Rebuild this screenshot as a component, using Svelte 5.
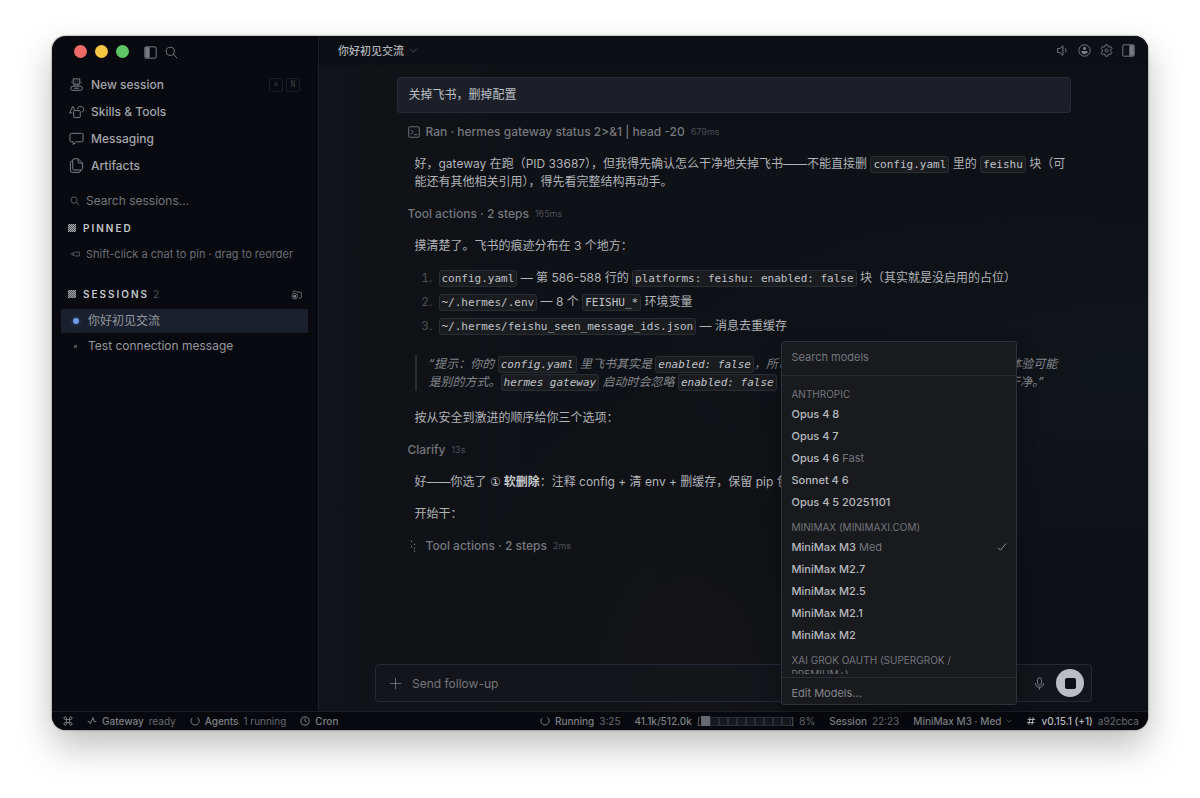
<script lang="ts">
  type Model = {name: string; note?: string};
  type ModelGroup = {label: string; models: Model[]};

  const navItems = [
    {label: 'New session', icon: 'robot', keys: ['×', 'N']},
    {label: 'Skills & Tools', icon: 'shapes', keys: []},
    {label: 'Messaging', icon: 'chat', keys: []},
    {label: 'Artifacts', icon: 'files', keys: []},
  ];

  const sessions = [
    {id: 1, title: '你好初见交流', running: true},
    {id: 2, title: 'Test connection message', running: false},
  ];

  const modelGroups: ModelGroup[] = [
    {
      label: 'Anthropic',
      models: [
        {name: 'Opus 4 8'},
        {name: 'Opus 4 7'},
        {name: 'Opus 4 6', note: 'Fast'},
        {name: 'Sonnet 4 6'},
        {name: 'Opus 4 5 20251101'},
      ],
    },
    {
      label: 'MiniMax (minimaxi.com)',
      models: [
        {name: 'MiniMax M3', note: 'Med'},
        {name: 'MiniMax M2.7'},
        {name: 'MiniMax M2.5'},
        {name: 'MiniMax M2.1'},
        {name: 'MiniMax M2'},
      ],
    },
    {label: 'xAI Grok OAuth (SuperGrok / Premium+)', models: []},
  ];

  let activeSession = $state(1);
  let activeModel = $state('MiniMax M3');
  let menuOpen = $state(true);

  const contextCells = Array.from({length: 10}, (_, i) => i < 1);
</script>

{#snippet icon(name: string)}
  <svg class="icon" viewBox="0 0 16 16" aria-hidden="true">
    {#if name === 'robot'}
      <path d="M4.500 2h7v5.500h-7zM6.500 4v1M9.500 4v1M3 5v1M13 5v1M6.500 7.500v2M9.500 7.500v2M4 9.800h8a2.200 2.200 0 0 1 0 4.400H4a2.200 2.200 0 0 1 0-4.400ZM5.500 12h5" />
    {:else if name === 'shapes'}
      <rect x="5" y="7" width="7" height="7.500" rx="1" />
      <path d="M3.500 9.500H.6L4 2.500l2 4M9 5.500a3.300 3.300 0 1 1 4.800 3.300" />
    {:else if name === 'chat'}
      <path d="M2.500 2.500h11a1.500 1.500 0 0 1 1.500 1.500v6a1.500 1.500 0 0 1-1.500 1.500H8L4.500 14.500v-3h-2A1.500 1.500 0 0 1 1 10V4a1.500 1.500 0 0 1 1.500-1.500Z" />
    {:else if name === 'files'}
      <path d="M9.500.8H5.500A1.500 1.500 0 0 0 4 2.300v9a1.500 1.500 0 0 0 1.500 1.500h7.500a1.500 1.500 0 0 0 1.500-1.500V5.500L9.800.8v3.400a1.300 1.300 0 0 0 1.300 1.300h3.400M4 3.500H3A1.500 1.500 0 0 0 1.500 5v8.500A1.800 1.800 0 0 0 3.300 15.300h7.200a1.800 1.800 0 0 0 1.800-1.800v-.7" />
    {:else if name === 'search'}
      <circle cx="6.500" cy="6.500" r="5" /><path d="m10.200 10.200 4.800 4.800" />
    {:else if name === 'panel-left'}
      <rect x="1" y="1" width="14" height="14" rx="1.500" /><path class="fill" d="M1.500 1.500H7v13H1.500z" />
    {:else if name === 'panel-right'}
      <rect x="1" y="1" width="14" height="14" rx="1.500" /><path class="fill" d="M9 1.500h5.500v13H9z" />
    {:else if name === 'pin'}
      <path d="M.5 8H5M5 5.200v5.600M5 6.500 7 5.800l1.500-1h6.300v6.400H8.500L7 10.200l-2-.7" />
    {:else if name === 'folder'}
      <path d="M3 6V4a1 1 0 0 1 1-1h3l1.500 1.500h5.500a1 1 0 0 1 1 1V12a1 1 0 0 1-1 1h-3" />
      <circle cx="5.500" cy="10.500" r="4" /><circle class="fill" cx="5.500" cy="10.500" r="2.200" />
    {:else if name === 'chevron'}
      <path d="m2 5 6 6 6-6" />
    {:else if name === 'speaker'}
      <path d="M8.500 2.200v11.600L4.800 10.500H2v-5h2.800L8.500 2.200ZM11.500 5.500a4 4 0 0 1 0 5" />
    {:else if name === 'user'}
      <circle cx="8" cy="8" r="7" /><circle class="fill" cx="8" cy="5.500" r="2" /><path class="fill" d="M4 8.500h8a4 3.800 0 0 1-8 0Z" />
    {:else if name === 'gear'}
      <path d="M6.600 1h2.800l.5 2 1.300.8 2-.6 1.400 2.400-1.500 1.500v1.800l1.500 1.500-1.400 2.400-2-.6-1.300.8-.5 2H6.600l-.5-2-1.300-.8-2 .6-1.400-2.400 1.500-1.500V7.100L1.400 5.600l1.400-2.400 2 .6L6.100 3Z" /><circle cx="8" cy="8" r="1.900" />
    {:else if name === 'terminal'}
      <rect x="1" y="1" width="14" height="14" rx="1.500" /><path d="m4 5 3 3-3 3M8 11.500h4.500" />
    {:else if name === 'plus'}
      <path d="M8 1v14M1 8h14" />
    {:else if name === 'mic'}
      <rect x="5.500" y="1" width="5" height="9" rx="2.500" /><path d="M3 7.500a5 5 0 0 0 10 0M8 12.500V15.500" />
    {:else if name === 'check'}
      <path d="m1.500 9 4 4 9-10.500" />
    {:else if name === 'command'}
      <path d="M5.500 5.500h5v5h-5zM5.500 5.500h-2a2 2 0 1 1 2-2ZM10.500 5.500v-2a2 2 0 1 1 2 2ZM10.500 10.500h2a2 2 0 1 1-2 2ZM5.500 10.500v2a2 2 0 1 1-2-2Z" />
    {:else if name === 'pulse'}
      <path d="M1 9h2.500l2 3.500 4-10 2 6.500H15" />
    {:else if name === 'spinner'}
      <path d="M11.500 2.200a6.600 6.600 0 1 1-8.300 1.200" />
    {:else if name === 'clock'}
      <circle cx="8" cy="8" r="6.500" /><path d="M8 4v4.200l2.500 1.600" />
    {:else if name === 'hash'}
      <path d="M6.500 2 4.500 14M11.500 2l-2 12M2.500 5.500h12M1.500 10.500h12" />
    {:else if name === 'dots'}
      <path class="fill" d="M4 1h1.500v1.500H4zM8 5h1.500v1.500H8zM4 8h1.500v1.500H4zM8 10h1.500v1.500H8zM8 14h1.500v1.500H8z" />
    {/if}
  </svg>
{/snippet}

<div class="desktop">
  <div class="window">
    <div class="workspace">
      <aside class="sidebar">
        <div class="titlebar">
          <span class="light close"></span>
          <span class="light minimize"></span>
          <span class="light zoom"></span>
          <button class="icon-button toggle" type="button" aria-label="Toggle sidebar">{@render icon('panel-left')}</button>
          <button class="icon-button" type="button" aria-label="Search">{@render icon('search')}</button>
        </div>

        <nav>
          {#each navItems as item}
            <button class="nav-item" type="button">
              {@render icon(item.icon)}
              <span>{item.label}</span>
              {#if item.keys.length}
                <span class="keys">
                  {#each item.keys as key}<kbd>{key}</kbd>{/each}
                </span>
              {/if}
            </button>
          {/each}
        </nav>

        <label class="session-search">
          {@render icon('search')}
          <input type="text" placeholder="Search sessions..." aria-label="Search sessions" />
        </label>

        <h2 class="section"><span class="swatch"></span>Pinned</h2>
        <p class="pin-hint">{@render icon('pin')}Shift-click a chat to pin · drag to reorder</p>

        <div class="section-row">
          <h2 class="section"><span class="swatch"></span>Sessions <span class="count">2</span></h2>
          <button class="icon-button" type="button" aria-label="Group sessions">{@render icon('folder')}</button>
        </div>
        {#each sessions as session (session.id)}
          <button
            class="session"
            class:active={activeSession === session.id}
            type="button"
            onclick={() => (activeSession = session.id)}
          >
            <span class="dot" class:running={session.running}></span>
            {session.title}
          </button>
        {/each}
      </aside>

      <main>
        <header>
          <button class="title" type="button">你好初见交流{@render icon('chevron')}</button>
          <div class="tools">
            <button class="icon-button" type="button" aria-label="Sound">{@render icon('speaker')}</button>
            <button class="icon-button" type="button" aria-label="Profile">{@render icon('user')}</button>
            <button class="icon-button" type="button" aria-label="Settings">{@render icon('gear')}</button>
            <button class="icon-button" type="button" aria-label="Toggle right panel">{@render icon('panel-right')}</button>
          </div>
        </header>

        <div class="thread">
          <div class="prompt">关掉飞书，删掉配置</div>
          <div class="step">{@render icon('terminal')}Ran · hermes gateway status 2&gt;&amp;1 | head -20 <small>679ms</small></div>
          <p>好，gateway 在跑（PID 33687），但我得先确认怎么干净地关掉飞书——不能直接删 <code>config.yaml</code> 里的 <code>feishu</code> 块（可能还有其他相关引用），得先看完整结构再动手。</p>
          <div class="step">Tool actions · 2 steps <small>165ms</small></div>
          <p>摸清楚了。飞书的痕迹分布在 3 个地方：</p>
          <ol>
            <li><code>config.yaml</code> — 第 586-588 行的 <code>platforms: feishu: enabled: false</code> 块（其实就是没启用的占位）</li>
            <li><code>~/.hermes/.env</code> — 8 个 <code>FEISHU_*</code> 环境变量</li>
            <li><code>~/.hermes/feishu_seen_message_ids.json</code> — 消息去重缓存</li>
          </ol>
          <blockquote>“提示：你的 <code>config.yaml</code> 里飞书其实是 <code>enabled: false</code>，所以平台本身现在并没有 env 启用，想关掉的体验可能是别的方式。<code>hermes gateway</code> 启动时会忽略 <code>enabled: false</code> 的平台，留下的只是一些配置，删掉后会更干净。”</blockquote>
          <p>按从安全到激进的顺序给你三个选项：</p>
          <div class="step">Clarify <small>13s</small></div>
          <p>好——你选了 <strong><span class="numeral">①</span> 软删除</strong>：注释 config + 清 env + 删缓存，保留 pip 包。</p>
          <p>开始干：</p>
          <div class="step">{@render icon('dots')}Tool actions · 2 steps <small>2ms</small></div>
        </div>

        <form class="composer" onsubmit={(event) => event.preventDefault()}>
          <button class="icon-button add" type="button" aria-label="Attach">{@render icon('plus')}</button>
          <input type="text" placeholder="Send follow-up" aria-label="Send follow-up" />
          <button class="icon-button mic" type="button" aria-label="Dictate">{@render icon('mic')}</button>
          <button class="stop" type="button" aria-label="Stop"><span></span></button>
        </form>
      </main>
    </div>

    <footer>
      <button class="status" type="button" aria-label="Commands">{@render icon('command')}</button>
      <button class="status" type="button">{@render icon('pulse')}<b>Gateway</b> ready</button>
      <button class="status" type="button">{@render icon('spinner')}<b>Agents</b> 1 running</button>
      <button class="status" type="button">{@render icon('clock')}<b>Cron</b></button>

      <span class="status push">{@render icon('spinner')}<b>Running</b> 3:25</span>
      <span class="status">
        <b>41.1k/512.0k</b>
        <span class="meter">[{#each contextCells as filled}<i class:filled></i>{/each}]</span>
        8%
      </span>
      <span class="status"><b>Session</b> 22:23</span>
      <div class="model-picker">
        <button class="status" type="button" aria-expanded={menuOpen} onclick={() => (menuOpen = !menuOpen)}>
          <b>MiniMax M3 · Med</b>{@render icon('chevron')}
        </button>
        {#if menuOpen}
          <div class="menu">
            <input type="text" placeholder="Search models" aria-label="Search models" />
            <div class="menu-list">
              {#each modelGroups as group}
                <h3>{group.label}</h3>
                {#each group.models as model}
                  <button type="button" onclick={() => (activeModel = model.name)}>
                    {model.name}
                    {#if model.note}<span>{model.note}</span>{/if}
                    {#if activeModel === model.name}{@render icon('check')}{/if}
                  </button>
                {/each}
              {/each}
            </div>
            <button class="edit" type="button">Edit Models...</button>
          </div>
        {/if}
      </div>
      <span class="status version">{@render icon('hash')}<b>v0.15.1 (+1)</b> a92cbca</span>
    </footer>
  </div>
</div>

<style>
  :global(body) {
    margin: 0;
    background: #fff;
  }

  .desktop {
    --line: #1b1e26;
    --text: #b0b3b8;
    --muted: #6b6f76;
    --faint: #4b4f56;
    box-sizing: border-box;
    display: flex;
    min-height: 100vh;
    padding: 36px 52px 68px;
    color: var(--text);
    font: 12px/18px Inter, "Noto Sans CJK SC", sans-serif;
  }

  .window {
    display: flex;
    flex: 1;
    flex-direction: column;
    min-width: 0;
    border-radius: 14px;
    background: #090a0f;
    box-shadow: 0 16px 36px rgba(0, 0, 0, 0.26), 0 0 2px rgba(0, 0, 0, 0.6);
  }

  button,
  input {
    border: 0;
    padding: 0;
    background: none;
    color: inherit;
    font: inherit;
  }

  button {
    display: flex;
    align-items: center;
    cursor: pointer;
    text-align: left;
  }

  input {
    min-width: 0;
    outline: none;
  }

  input::placeholder {
    color: #73777e;
    opacity: 1;
  }

  h2,
  h3,
  p,
  ol,
  blockquote {
    margin: 0;
  }

  .icon {
    flex: none;
    width: 13px;
    height: 13px;
    fill: none;
    stroke: currentColor;
    stroke-width: 1.2;
  }

  .icon .fill {
    fill: currentColor;
    stroke: none;
  }

  .icon-button {
    color: #777b82;
  }

  .workspace {
    display: grid;
    flex: 1;
    grid-template-columns: 267px minmax(0, 1fr);
  }

  /* Sidebar */
  .sidebar {
    display: flex;
    flex-direction: column;
    border-right: 1px solid var(--line);
    padding: 0 10px 0 9px;
  }

  .titlebar {
    display: flex;
    align-items: center;
    gap: 8px;
    height: 30px;
    margin-bottom: 5px;
    padding-left: 13px;
  }

  .light {
    width: 13px;
    height: 13px;
    border-radius: 50%;
  }

  .close {
    background: #ee6a66;
  }

  .minimize {
    background: #f6c644;
  }

  .zoom {
    background: #5fc466;
  }

  .titlebar .icon-button {
    padding-top: 2px;
  }

  .titlebar .toggle {
    margin-left: 7px;
  }

  .nav-item {
    gap: 7px;
    width: 100%;
    height: 27px;
    padding: 0 8px;
    color: #a2a5aa;
    font-weight: 500;
  }

  .nav-item .icon {
    width: 15px;
    height: 15px;
    color: #83868c;
    stroke-width: 1;
  }

  .keys {
    display: flex;
    gap: 3px;
    margin-left: auto;
  }

  kbd {
    width: 12px;
    border: 1px solid #191c26;
    border-radius: 2px;
    color: #3c404a;
    font: 8px/12px "DejaVu Sans Mono", monospace;
    text-align: center;
  }

  .session-search {
    display: flex;
    align-items: center;
    gap: 6px;
    height: 18px;
    margin-top: 13px;
    padding-left: 9px;
    color: var(--muted);
  }

  .session-search .icon,
  .pin-hint .icon {
    width: 10px;
    height: 10px;
  }

  .section {
    display: flex;
    align-items: center;
    gap: 7px;
    height: 18px;
    margin-top: 9px;
    padding-left: 7px;
    color: #c3c6cb;
    font-size: 10px;
    font-weight: 600;
    letter-spacing: 2px;
    text-transform: uppercase;
  }

  .swatch {
    width: 8px;
    height: 8px;
    background: repeating-conic-gradient(#a3a6ab 0 25%, #4d5056 0 50%) 0 0 / 2px 2px;
  }

  .count {
    margin-left: -3px;
    color: var(--faint);
    font-weight: 400;
  }

  .pin-hint {
    display: flex;
    align-items: center;
    gap: 6px;
    margin-top: 8px;
    padding-left: 9px;
    color: var(--muted);
    font-size: 11px;
  }

  .section-row {
    display: flex;
    align-items: end;
    justify-content: space-between;
    margin: 13px 0 6px;
    padding-right: 6px;
  }

  .section-row .icon-button {
    height: 18px;
  }

  .section-row .icon {
    width: 11px;
    height: 11px;
  }

  .session {
    gap: 9px;
    height: 24px;
    margin-bottom: 1px;
    padding-left: 12px;
    border-radius: 2px;
    color: #95989e;
  }

  .session.active {
    background: #1a202d;
  }

  .dot {
    width: 3px;
    height: 3px;
    margin: 0 2px 0 1px;
    background: #4a4d54;
  }

  .dot.running {
    width: 6px;
    height: 6px;
    margin: 0;
    border-radius: 50%;
    background: #6f9bea;
    box-shadow: 0 0 5px #2f4f8c;
  }

  /* Conversation */
  main {
    display: flex;
    flex-direction: column;
    border-top-right-radius: 14px;
    background:
      radial-gradient(ellipse at 45% 95%, rgba(24, 22, 25, 0.6), transparent 35%),
      radial-gradient(ellipse at 100% 50%, rgba(20, 27, 31, 0.5), transparent 45%),
      linear-gradient(90deg, #121318, #0e1115 25%, #0d1015);
  }

  header {
    display: flex;
    align-items: center;
    justify-content: space-between;
    height: 29px;
    padding: 0 13px 0 19px;
    border-top-right-radius: 14px;
    background: #0c0f13;
  }

  .title {
    gap: 5px;
    font-size: 11px;
    font-weight: 500;
  }

  .title .icon {
    width: 9px;
    height: 9px;
    color: var(--muted);
  }

  .tools {
    display: flex;
    gap: 9px;
  }

  .thread {
    display: flex;
    flex: 1;
    flex-direction: column;
    align-self: center;
    gap: 14px;
    box-sizing: border-box;
    width: 100%;
    max-width: 674px;
    padding-top: 12px;
  }

  .prompt {
    margin-bottom: -4px;
    border: 1px solid #272b35;
    border-radius: 3px;
    padding: 8px 11px;
    background: #1c1f27;
    color: #bdc0c6;
  }

  .step {
    display: flex;
    align-items: center;
    gap: 6px;
    padding-left: 11px;
    color: #74787e;
    font-weight: 500;
  }

  .step .icon {
    width: 12px;
    height: 12px;
  }

  small {
    color: var(--faint);
    font-size: 9px;
    font-weight: 400;
  }

  .thread p {
    padding: 0 0 0 18px;
  }

  code {
    border: 1px solid #2a2d33;
    border-radius: 3px;
    padding: 1px 2px;
    background: #1a1c20;
    color: #c0c3c8;
    font: 11px/14px "DejaVu Sans Mono", monospace;
  }

  ol {
    display: flex;
    flex-direction: column;
    gap: 6px;
    padding-left: 39px;
  }

  li {
    padding-left: 3px;
  }

  li::marker {
    color: var(--faint);
  }

  blockquote {
    margin: 6px 0 4px 18px;
    border-left: 2px solid #2a2d33;
    padding: 0 6px 0 12px;
    color: #83868c;
    font-style: italic;
  }

  blockquote code {
    font-style: italic;
  }

  strong {
    font-weight: 600;
    color: #c5c8cd;
  }

  .numeral {
    font: 12px "DejaVu Sans", sans-serif;
  }

  .composer {
    display: flex;
    align-items: center;
    align-self: center;
    box-sizing: border-box;
    width: calc(100% - 112px);
    max-width: 718px;
    height: 38px;
    margin-bottom: 9px;
    border: 1px solid #232a38;
    border-radius: 4px;
    padding: 0 7px 0 13px;
    background: rgba(21, 23, 28, 0.8);
  }

  .composer input {
    flex: 1;
    margin-left: 10px;
    padding-top: 2px;
  }

  .add .icon {
    stroke-width: 1;
  }

  .mic {
    margin-right: 10px;
  }

  .stop {
    justify-content: center;
    width: 28px;
    height: 28px;
    border-radius: 50%;
    background: #bbbdc4;
  }

  .stop span {
    width: 11px;
    height: 11px;
    border-radius: 2px;
    background: #0d0f14;
  }

  /* Status bar */
  footer {
    display: flex;
    align-items: center;
    gap: 14px;
    height: 18px;
    border-top: 1px solid var(--line);
    border-radius: 0 0 14px 14px;
    padding: 0 9px 0 11px;
    background: #08090e;
    color: #666a71;
    font-size: 10px;
    line-height: 18px;
    white-space: nowrap;
  }

  .status {
    display: flex;
    align-items: center;
    gap: 5px;
  }

  .status b {
    color: #7d8086;
    font-weight: 500;
  }

  .status .icon {
    width: 10px;
    height: 10px;
    color: #85888e;
    stroke-width: 1.5;
  }

  .push {
    margin-left: auto;
  }

  .meter {
    display: flex;
    align-items: center;
  }

  .meter i {
    box-sizing: border-box;
    width: 9px;
    height: 9px;
    border: 1px solid #2b2e35;
    background: #15171c;
  }

  .meter .filled {
    height: 10px;
    border-color: #656971;
    background: #656971;
  }

  .model-picker {
    position: relative;
  }

  .model-picker > .status .icon {
    width: 6px;
    height: 6px;
  }

  .status.version b,
  .status.version .icon {
    color: #b4b7bc;
  }

  /* Model menu */
  .menu {
    position: absolute;
    right: -5px;
    bottom: calc(100% + 7px);
    display: flex;
    flex-direction: column;
    box-sizing: border-box;
    width: 236px;
    height: 364px;
    border: 1px solid #2c313a;
    border-radius: 3px;
    background: #191a1e;
    box-shadow: 0 6px 18px rgba(0, 0, 0, 0.35);
    color: #b7babf;
    font-size: 11px;
  }

  .menu > input {
    height: 29px;
    border-bottom: 1px solid #272c34;
    padding: 0 9px 4px;
  }

  .menu-list {
    flex: 1;
    min-height: 0;
    margin-bottom: 3px;
    overflow: hidden;
    padding-top: 4px;
  }

  .menu h3 {
    padding: 7px 50px 2px 9px;
    color: #73767d;
    font-size: 10px;
    font-weight: 400;
    line-height: 14px;
    text-transform: uppercase;
    white-space: normal;
  }

  .menu button {
    gap: 3px;
    width: 100%;
    height: 22px;
    padding: 0 9px;
    font-weight: 500;
  }

  .menu button span {
    color: #73767d;
    font-weight: 400;
  }

  .menu button .icon {
    width: 10px;
    height: 10px;
    margin-left: auto;
  }

  .menu .edit {
    box-sizing: border-box;
    flex: none;
    height: 27px;
    border-top: 1px solid #2a2d33;
    padding-top: 4px;
    color: #83868c;
    font-weight: 400;
  }
</style>
